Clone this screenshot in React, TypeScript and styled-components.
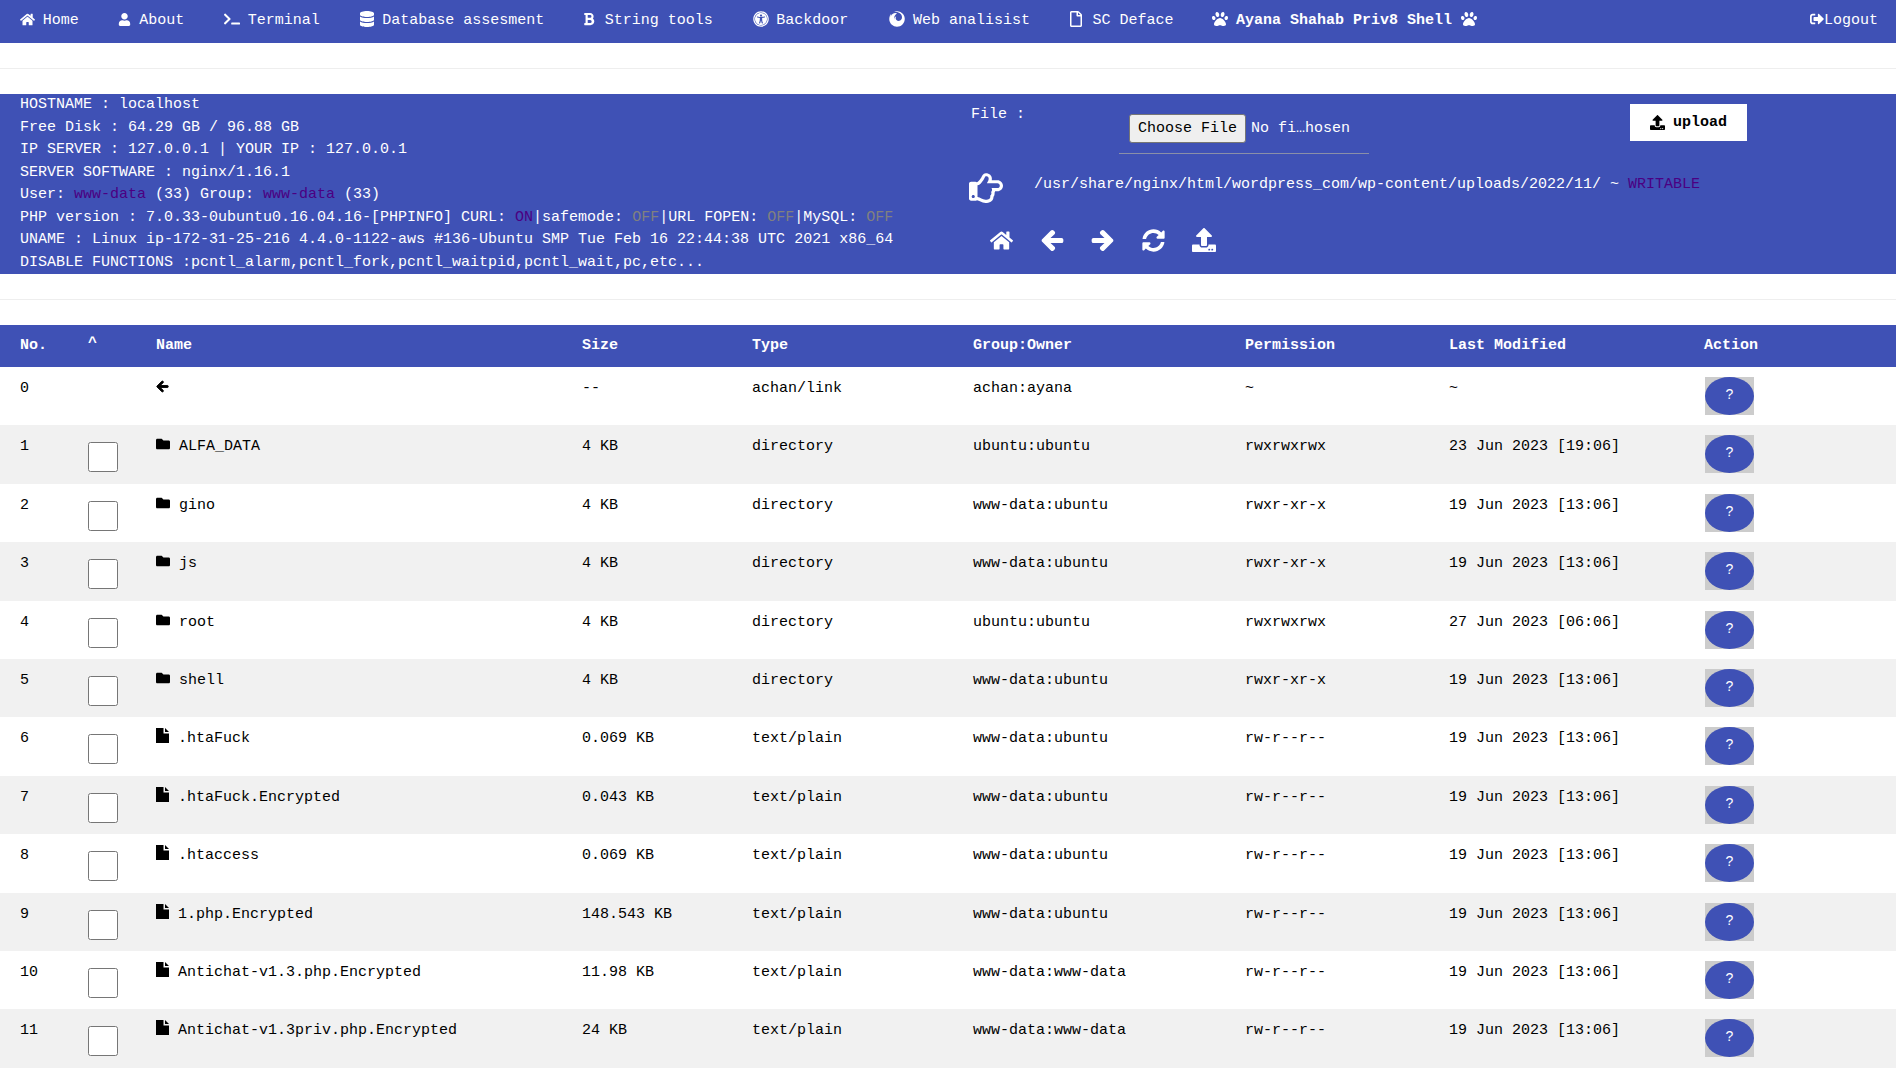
import React from "react";
import styled, { createGlobalStyle } from "styled-components";
import {
  FaHome, FaUser, FaTerminal, FaDatabase, FaBold, FaUniversalAccess, FaFirefox, FaRegFile, FaPaw,
  FaSignOutAlt, FaUpload, FaRegHandPointRight, FaArrowLeft, FaArrowRight, FaSyncAlt, FaFolder,
} from "react-icons/fa";

const Global = createGlobalStyle`
  html, body { margin: 0; padding: 0; background: #fff; }
  body { font-family: "Liberation Mono", "Courier New", monospace; font-size: 15px; line-height: 1.5; color: #000; }
`;

const Nav = styled.nav`
  display: flex;
  height: 43px;
  background: #3f51b5;
  color: #fff;
`;
const NavItem = styled.a<{ $bold?: boolean; $push?: boolean }>`
  display: flex;
  align-items: flex-start;
  padding: 10px 19.75px 0;
  white-space: pre;
  font-weight: ${(p) => (p.$bold ? "bold" : "normal")};
  ${(p) => (p.$push ? "margin-left: auto; padding-right: 18px;" : "")}
`;
const NavIcon = styled.span<{ $w: number; $x?: number }>`
  display: inline-flex;
  align-items: center;
  width: ${(p) => p.$w}px;
  height: 20px;
  margin-top: -1px;
  flex: none;
  & > svg { margin-left: ${(p) => p.$x ?? 0}px; }
`;
const TrailIcon = styled.span`
  display: inline-flex;
  align-items: center;
  height: 20px;
  margin: -1px 0 0 9px;
`;
const Rule = styled.hr`
  border: 0;
  border-top: 1px solid #eee;
  margin: 25px 0;
`;
const Panel = styled.section`
  display: flex;
  height: 180px;
  background: #3f51b5;
  color: #fff;
`;
const InfoCol = styled.div`
  flex: 0 0 971px;
  box-sizing: border-box;
  padding-left: 20px;
`;
const InfoLine = styled.div`
  white-space: pre;
`;
const Hot = styled.span`
  color: #4b0082;
`;
const Off = styled.span`
  color: #808080;
`;
const ToolCol = styled.div`
  flex: 1;
  min-width: 0;
`;
const UploadRow = styled.form`
  display: flex;
  align-items: flex-start;
  height: 78px;
  margin: 0;
`;
const FileLabel = styled.label`
  flex: 0 0 148px;
  margin-top: 10px;
`;
const FileField = styled.input`
  flex: 0 0 250px;
  box-sizing: border-box;
  width: 250px;
  margin: 14px 0 0;
  padding: 6px 11px 10px 10px;
  border: 0;
  border-bottom: 1px solid #8a8fa8;
  background: transparent;
  color: #fff;
  font-family: "Liberation Mono", monospace;
  font-size: 15px;
  line-height: 1;
  &::file-selector-button {
    font: inherit;
    color: #000;
    height: 29px;
    padding: 0 8px;
    background: #efefef;
    border: 1px solid #767676;
    border-radius: 3px;
    margin-right: 5px;
  }
`;
const UploadButton = styled.button`
  display: flex;
  align-items: center;
  justify-content: center;
  gap: 8px;
  width: 117px;
  height: 37px;
  margin: 10px 0 0 261px;
  padding: 0;
  border: 0;
  background: #fff;
  color: #000;
  font: bold 15px "Liberation Mono", monospace;
`;
const PathRow = styled.div`
  display: flex;
  align-items: flex-start;
  height: 56px;
`;
const Thumb = styled.span`
  display: flex;
  flex: none;
  margin: -1px 31px 0 -2px;
  font-size: 34px;
  line-height: 1;
`;
const PathText = styled.span`
  white-space: pre;
  margin-top: 2px;
`;
const ToolRow = styled.div`
  display: flex;
  align-items: center;
  gap: 27.6px;
  padding-left: 19px;
  font-size: 23px;
`;
const Table = styled.table`
  width: 100%;
  table-layout: fixed;
  border-collapse: collapse;
  margin-top: 25px;
`;
const Col = styled.col<{ $w: number }>`
  width: ${(p) => p.$w}px;
`;
const HeadRow = styled.tr`
  height: 42px;
  background: #3f51b5;
  color: #fff;
`;
const Th = styled.th`
  padding: 10px 8px 8px;
  text-align: left;
  vertical-align: top;
  font-weight: bold;
  &:first-child { padding-left: 20px; }
`;
const Caret = styled.span`
  display: block;
  margin-top: -2px;
`;
const Row = styled.tr`
  height: 58.4px;
  background: #fff;
  &:nth-child(even) { background: #f1f1f1; }
`;
const Td = styled.td`
  padding: 11px 8px 8px;
  vertical-align: top;
  white-space: pre;
  &:first-child { padding-left: 20px; }
`;
const Check = styled.input`
  display: block;
  width: 30px;
  height: 30px;
  margin: 6px 0 0;
`;
const NameIcon = styled.span<{ $w: number }>`
  display: inline-block;
  width: ${(p) => p.$w}px;
  height: 15px;
  vertical-align: -1px;
`;
const ActionBox = styled.div`
  width: 49px;
  height: 38px;
  margin: -1px 0 0 1px;
  background: #ccc;
`;
const ActionButton = styled.button`
  display: block;
  width: 100%;
  height: 100%;
  padding: 0 0 4px;
  border: 0;
  border-radius: 50%;
  background: #3f51b5;
  color: #fff;
  font: 14px "Liberation Sans", Arial, sans-serif;
`;

const FileGlyph = () => (
  <svg width="13" height="15" viewBox="0 0 13 15" aria-hidden="true">
    <path d="M0 0H7.5V5.5H13V15H0Z" fill="#000" />
    <path d="M9 0L13 4H9Z" fill="#000" />
  </svg>
);

const heavy = { stroke: "currentColor", strokeWidth: 36 };

const navItems: { icon: React.ReactNode; w: number; x?: number; label: string }[] = [
  { icon: <FaHome size={15} />, w: 23, label: "Home" },
  { icon: <FaUser size={13} />, w: 21, label: "About" },
  { icon: <FaTerminal size={16} />, w: 24, label: "Terminal" },
  { icon: <FaDatabase size={16} />, w: 23, label: "Database assesment" },
  { icon: <FaBold size={14} />, w: 21, x: -2, label: "String tools" },
  { icon: <FaUniversalAccess size={16} />, w: 24, x: 1, label: "Backdoor" },
  { icon: <FaFirefox size={16} />, w: 25, x: 1, label: "Web analisist" },
  { icon: <FaRegFile size={16} />, w: 23, x: -1, label: "SC Deface" },
];

type F = [string, string, string, string, string, string];
const rows: F[] = [
  ["ALFA_DATA", "4 KB", "directory", "ubuntu:ubuntu", "rwxrwxrwx", "23 Jun 2023 [19:06]"],
  ["gino", "4 KB", "directory", "www-data:ubuntu", "rwxr-xr-x", "19 Jun 2023 [13:06]"],
  ["js", "4 KB", "directory", "www-data:ubuntu", "rwxr-xr-x", "19 Jun 2023 [13:06]"],
  ["root", "4 KB", "directory", "ubuntu:ubuntu", "rwxrwxrwx", "27 Jun 2023 [06:06]"],
  ["shell", "4 KB", "directory", "www-data:ubuntu", "rwxr-xr-x", "19 Jun 2023 [13:06]"],
  [".htaFuck", "0.069 KB", "text/plain", "www-data:ubuntu", "rw-r--r--", "19 Jun 2023 [13:06]"],
  [".htaFuck.Encrypted", "0.043 KB", "text/plain", "www-data:ubuntu", "rw-r--r--", "19 Jun 2023 [13:06]"],
  [".htaccess", "0.069 KB", "text/plain", "www-data:ubuntu", "rw-r--r--", "19 Jun 2023 [13:06]"],
  ["1.php.Encrypted", "148.543 KB", "text/plain", "www-data:ubuntu", "rw-r--r--", "19 Jun 2023 [13:06]"],
  ["Antichat-v1.3.php.Encrypted", "11.98 KB", "text/plain", "www-data:www-data", "rw-r--r--", "19 Jun 2023 [13:06]"],
  ["Antichat-v1.3priv.php.Encrypted", "24 KB", "text/plain", "www-data:www-data", "rw-r--r--", "19 Jun 2023 [13:06]"],
];
const widths = [80, 68, 426, 170, 221, 272, 204, 255, 200];

export default function App() {
  return (
    <>
      <Global />
      <Nav>
        {navItems.map((n) => (
          <NavItem key={n.label}>
            <NavIcon $w={n.w} $x={n.x}>{n.icon}</NavIcon>
            {n.label}
          </NavItem>
        ))}
        <NavItem $bold>
          <NavIcon $w={23} $x={-1}><FaPaw size={16} /></NavIcon>
          Ayana Shahab Priv8 Shell
          <TrailIcon><FaPaw size={16} /></TrailIcon>
        </NavItem>
        <NavItem $push>
          <NavIcon $w={15} $x={1}><FaSignOutAlt size={14} /></NavIcon>
          Logout
        </NavItem>
      </Nav>
      <Rule />
      <Panel>
        <InfoCol>
          <InfoLine>HOSTNAME : localhost</InfoLine>
          <InfoLine>Free Disk : 64.29 GB / 96.88 GB</InfoLine>
          <InfoLine>IP SERVER : 127.0.0.1 | YOUR IP : 127.0.0.1</InfoLine>
          <InfoLine>SERVER SOFTWARE : nginx/1.16.1</InfoLine>
          <InfoLine>User: <Hot>www-data</Hot> (33) Group: <Hot>www-data</Hot> (33)</InfoLine>
          <InfoLine>PHP version : 7.0.33-0ubuntu0.16.04.16-[PHPINFO] CURL: <Hot>ON</Hot>|safemode: <Off>OFF</Off>|URL FOPEN: <Off>OFF</Off>|MySQL: <Off>OFF</Off></InfoLine>
          <InfoLine>UNAME : Linux ip-172-31-25-216 4.4.0-1122-aws #136-Ubuntu SMP Tue Feb 16 22:44:38 UTC 2021 x86_64</InfoLine>
          <InfoLine>DISABLE FUNCTIONS :pcntl_alarm,pcntl_fork,pcntl_waitpid,pcntl_wait,pc,etc...</InfoLine>
        </InfoCol>
        <ToolCol>
          <UploadRow>
            <FileLabel>File :</FileLabel>
            <FileField type="file" />
            <UploadButton type="button"><FaUpload size={15} />upload</UploadButton>
          </UploadRow>
          <PathRow>
            <Thumb><FaRegHandPointRight /></Thumb>
            <PathText>/usr/share/nginx/html/wordpress_com/wp-content/uploads/2022/11/ ~ <Hot>WRITABLE</Hot></PathText>
          </PathRow>
          <ToolRow>
            <FaHome /><FaArrowLeft {...heavy} /><FaArrowRight {...heavy} /><FaSyncAlt /><FaUpload size={24} />
          </ToolRow>
        </ToolCol>
      </Panel>
      <Rule />
      <Table>
        <colgroup>{widths.map((w, i) => <Col key={i} $w={w} />)}</colgroup>
        <thead>
          <HeadRow>
            <Th>No.</Th><Th><Caret>^</Caret></Th><Th>Name</Th><Th>Size</Th><Th>Type</Th>
            <Th>Group:Owner</Th><Th>Permission</Th><Th>Last Modified</Th><Th>Action</Th>
          </HeadRow>
        </thead>
        <tbody>
          <Row>
            <Td>0</Td><Td />
            <Td><NameIcon $w={23}><FaArrowLeft size={13} {...heavy} /></NameIcon></Td>
            <Td>--</Td><Td>achan/link</Td><Td>achan:ayana</Td><Td>~</Td><Td>~</Td>
            <Td><ActionBox><ActionButton type="button">?</ActionButton></ActionBox></Td>
          </Row>
          {rows.map((r, i) => (
            <Row key={r[0]}>
              <Td>{i + 1}</Td>
              <Td><Check type="checkbox" /></Td>
              <Td>
                {r[2] === "directory"
                  ? <NameIcon $w={23}><FaFolder size={14} /></NameIcon>
                  : <NameIcon $w={22}><FileGlyph /></NameIcon>}
                {r[0]}
              </Td>
              <Td>{r[1]}</Td><Td>{r[2]}</Td><Td>{r[3]}</Td><Td>{r[4]}</Td><Td>{r[5]}</Td>
              <Td><ActionBox><ActionButton type="button">?</ActionButton></ActionBox></Td>
            </Row>
          ))}
        </tbody>
      </Table>
    </>
  );
}
